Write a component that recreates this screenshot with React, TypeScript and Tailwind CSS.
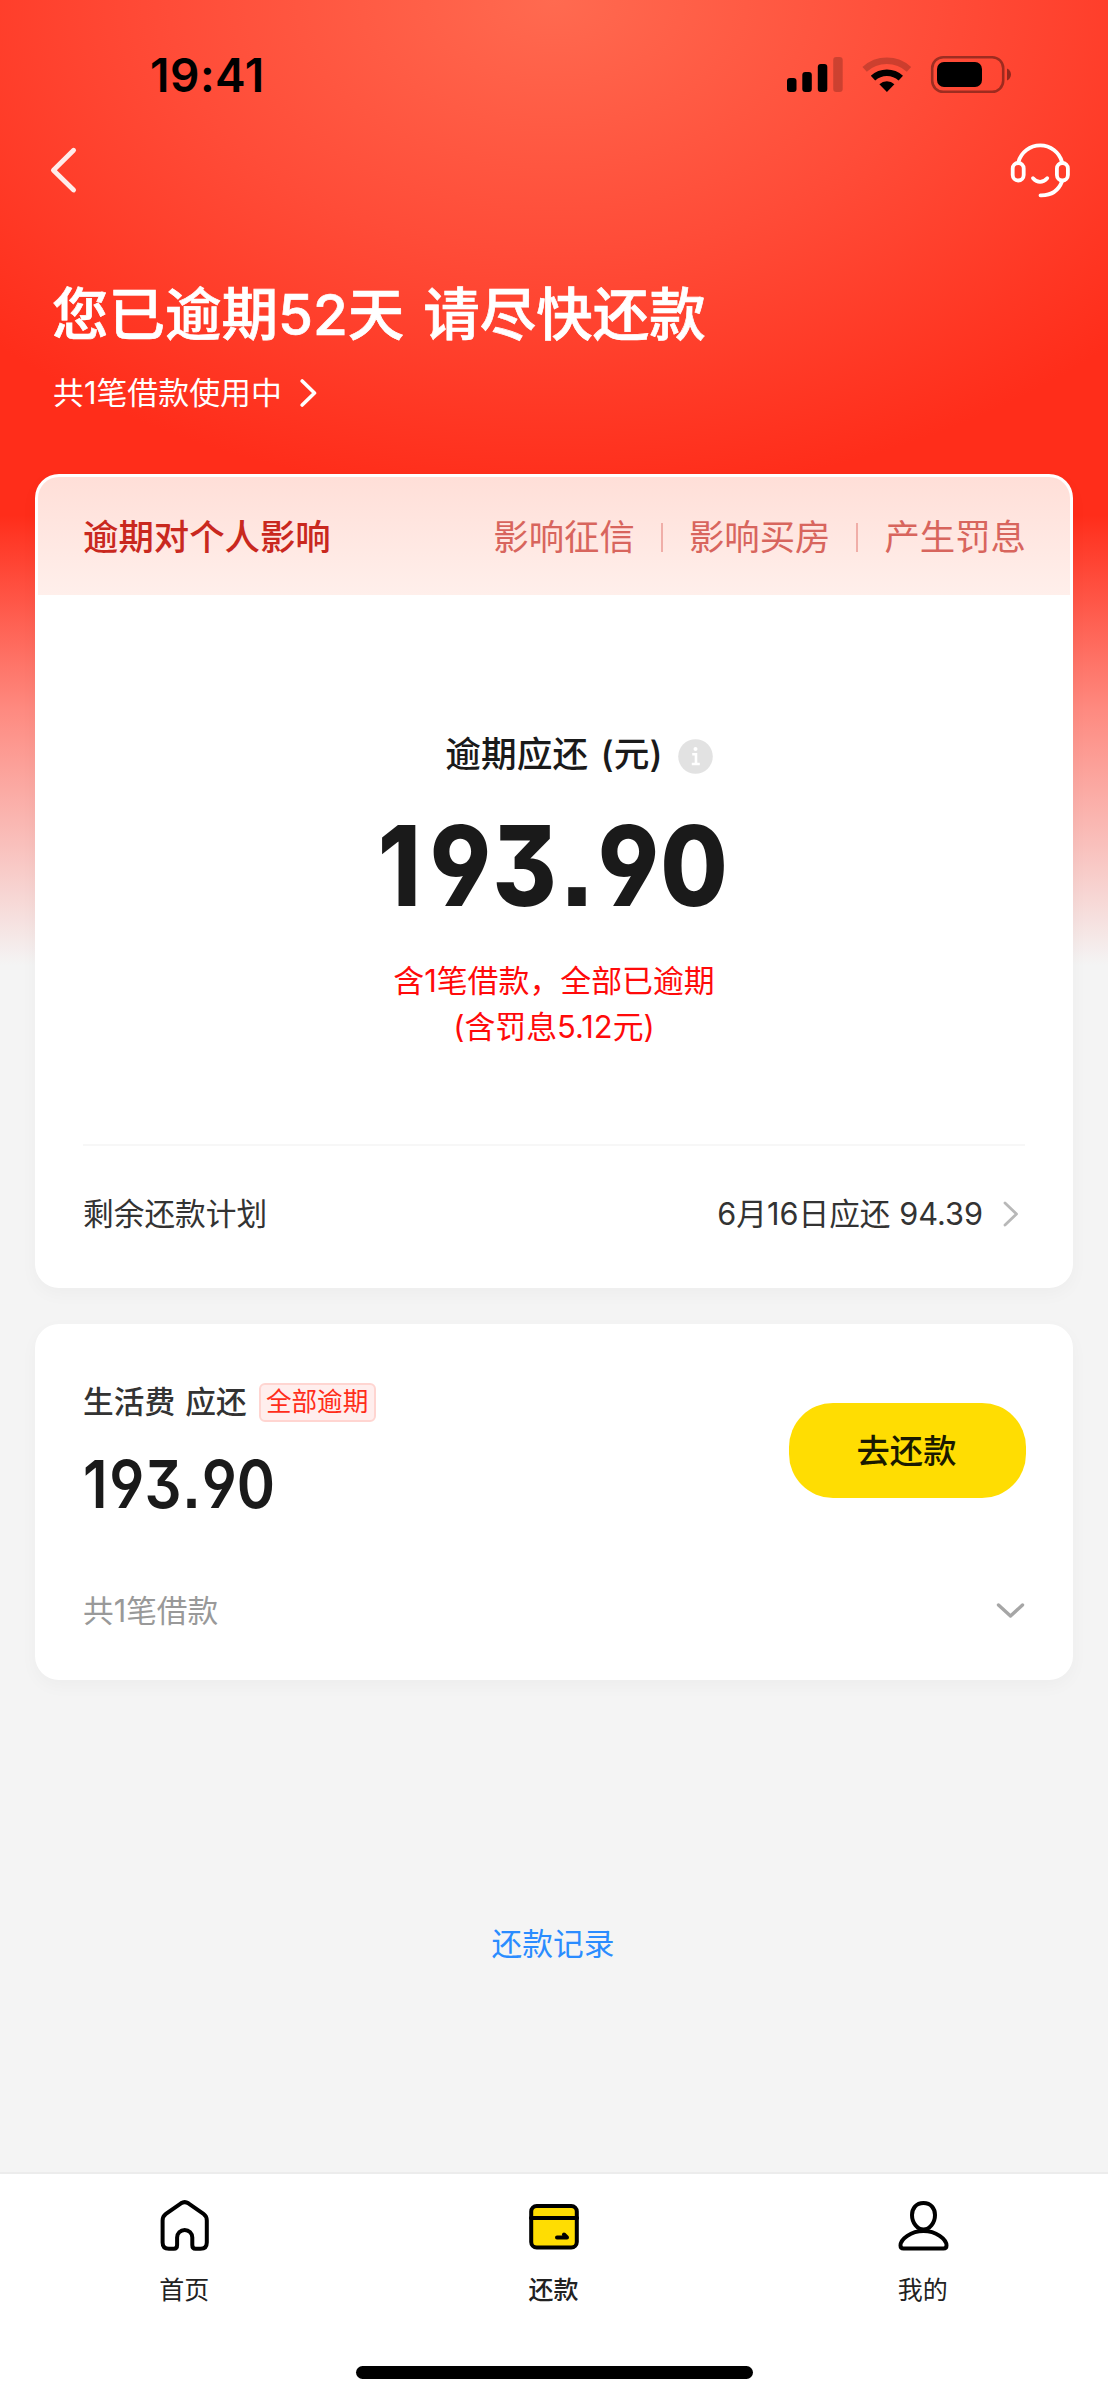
import React from "react";

const tags = ["影响征信", "影响买房", "产生罚息"];

function StatusBar() {
  return (
    <div className="flex h-[124px] items-start justify-between pl-[150px] pr-[96px]">
      <div className="mt-[47px] text-[46px] leading-[56px] font-semibold tracking-[0.5px] text-black">19:41</div>
      <svg className="mt-[54px]" width="226" height="40" viewBox="786 54 226 40">
        <rect x="787" y="78" width="9.5" height="14" rx="3" />
        <rect x="802.3" y="72" width="9.5" height="20" rx="3" />
        <rect x="817.8" y="64" width="9.5" height="28" rx="3" />
        <rect x="833.2" y="57" width="9.5" height="35" rx="3" fillOpacity="0.2" />
        <path d="M864.6 69.4A33 33 0 0 1 909 69.4" fill="none" stroke="#000" strokeOpacity="0.2" strokeWidth="6.5" />
        <path d="M873 78.2A20.5 20.5 0 0 1 900.8 78.2" fill="none" stroke="#000" strokeWidth="6.5" />
        <path d="M886.9 92L879.4 84.2A11 11 0 0 1 894.4 84.2Z" />
        <rect x="932.2" y="57.2" width="71" height="34.6" rx="11" fill="none" stroke="#000" strokeOpacity="0.38" strokeWidth="2.6" />
        <rect x="937" y="62" width="45" height="25" rx="7" />
        <path d="M1007 68.5C1009.6 69.6 1011 72 1011 74.5S1009.6 79.4 1007 80.5Z" fillOpacity="0.42" />
      </svg>
    </div>
  );
}

function Header() {
  return (
    <header>
      <StatusBar />
      <div className="flex h-[92px] items-center justify-between pl-[49px] pr-[37px]">
        <svg width="30" height="50" viewBox="49 145 30 50" fill="none" stroke="#ffecea" strokeWidth="4.8" strokeLinecap="round" strokeLinejoin="round">
          <path d="M73.6 150.2L53.4 170.2L73.6 190" />
        </svg>
        <svg width="62" height="58" viewBox="1009 141 62 58" fill="none" stroke="#fff" strokeWidth="3.8" strokeLinecap="round">
          <path d="M1018.4 162A22.6 22.6 0 0 1 1062 162" />
          <rect x="1012.7" y="163" width="11" height="17.5" rx="5.5" />
          <rect x="1056.9" y="163" width="11" height="17.5" rx="5.5" />
          <path d="M1062 181.5C1058.5 190.5 1051 195.6 1040.5 195.3" />
          <path d="M1033 178.2C1037.5 183.2 1042.5 183.2 1047.2 178.2" />
        </svg>
      </div>
      <h1 className="mt-[67px] ml-[52px] flex h-[64px] items-center text-[56.5px] leading-[64px] font-medium text-white [-webkit-text-stroke:0.7px_white]">
        您已逾期<span>52</span>天<span className="w-[19px]" />请尽快还款
      </h1>
      <div className="mt-[25px] ml-[53px] flex h-[42px] items-center text-[30.9px] text-white">
        <span>共1笔借款使用中</span>
        <svg className="ml-[18px]" width="18" height="32" viewBox="0 0 18 32" fill="none" stroke="#fff" strokeWidth="3.6" strokeLinecap="round" strokeLinejoin="round">
          <path d="M2.2 4L14.5 16L2.2 28" />
        </svg>
      </div>
    </header>
  );
}

function Amount({ large }: { large?: boolean }) {
  return (
    <div
      className={
        large
          ? "mr-[2px] h-[112px] origin-center scale-x-[0.88] text-[111px] leading-[112px] font-extrabold whitespace-nowrap text-[#1a1a1a]"
          : "h-[68px] origin-left scale-x-[0.88] text-[66px] leading-[68px] font-semibold whitespace-nowrap text-[#1a1a1a]"
      }
      style={{ fontFeatureSettings: '"ss01", "ss07"' }}
    >
      <span className={large ? "mr-[10px]" : "mr-[2px]"}>1</span>
      <span className={large ? "tracking-[1.5px]" : ""}>93</span>
      <span className={large ? "mr-[4px] ml-[2px]" : "mr-[1px] ml-[1px]"}>.</span>
      <span className={large ? "mr-[1.5px]" : ""}>9</span>
      <span>0</span>
    </div>
  );
}

function OverdueCard() {
  return (
    <section className="mx-[35px] mt-[60px] h-[814px] rounded-[24px] bg-white p-[3px] shadow-[0_6px_18px_rgba(0,0,0,0.03)]">
      <div className="flex h-[118px] items-center justify-between rounded-t-[21px] bg-linear-to-b from-[#ffdfd8] to-[#ffefeb] pt-[3px] pr-[44px] pl-[45px] text-[35.4px]">
        <span className="font-medium text-[#c9281e]">逾期对个人影响</span>
        <div className="flex items-center text-[#d8655d]">
          {tags.map((t, i) => (
            <React.Fragment key={t}>
              {i > 0 && <span className="mx-[26px] h-[29px] w-[2px] bg-[#f0aea8]" />}
              <span>{t}</span>
            </React.Fragment>
          ))}
        </div>
      </div>
      <div className="flex h-[549px] flex-col items-center pt-[135px]">
        <div className="ml-[50px] flex h-[49px] items-center text-[35.7px] font-medium text-[#1a1a1a]">
          <span className="[word-spacing:3px]">逾期应还 (元)</span>
          <svg className="mt-[3px] ml-[15px]" width="35" height="35" viewBox="0 0 35 35">
            <circle cx="17.5" cy="17.5" r="17.3" fill="#e2e2e2" />
            <circle cx="17.5" cy="10" r="2" fill="#fff" />
            <path d="M14.2 15.2H18V25M13.8 25H21.8" fill="none" stroke="#fff" strokeWidth="2.6" />
          </svg>
        </div>
        <div className="mt-[31px]">
          <Amount large />
        </div>
        <div className="mt-[36px] text-center text-[30.9px] leading-[46px] text-[#ff0a0a]">
          <p>含1笔借款，全部已逾期</p>
          <p>(含罚息5.12元)</p>
        </div>
      </div>
      <div className="mx-[45px] flex h-[139px] items-center justify-between border-t-2 border-[#f7f7f7] pb-[1px] text-[30.7px] text-[#333]">
        <span>剩余还款计划</span>
        <div className="flex items-center">
          <span>6月16日应还 94.39</span>
          <svg className="mr-[5px] ml-[19px]" width="18" height="28" viewBox="0 0 18 28" fill="none" stroke="#b8b8b8" strokeWidth="2.8" strokeLinecap="round" strokeLinejoin="round">
            <path d="M3 3L14.5 14L3 25" />
          </svg>
        </div>
      </div>
    </section>
  );
}

function LoanCard() {
  return (
    <section className="mx-[35px] mt-[36px] h-[356px] rounded-[24px] bg-white pr-[47px] pl-[48px] shadow-[0_6px_18px_rgba(0,0,0,0.03)]">
      <div className="flex h-[238px] justify-between">
        <div className="pt-[59px]">
          <div className="flex h-[39px] items-center text-[30.7px] font-medium text-[#333]">
            <span className="[word-spacing:2px]">生活费 应还</span>
            <span className="ml-[12px] flex h-[39px] w-[117px] items-center justify-center rounded-[6px] border-2 border-[#ffd5d1] bg-[#ffeeed] text-[25.6px] font-normal text-[#ff2d1a]">
              全部逾期
            </span>
          </div>
          <div className="mt-[28px]">
            <Amount />
          </div>
        </div>
        <button className="mt-[79px] h-[95px] w-[237px] rounded-[44px] bg-[#ffdd02] pt-[2px] pr-[2px] text-[33.3px] font-medium text-[#1a1a00]">
          去还款
        </button>
      </div>
      <div className="flex h-[98px] items-center justify-between text-[30.7px] text-[#999]">
        <span>共1笔借款</span>
        <svg width="31" height="18" viewBox="0 0 31 18" fill="none" stroke="#a6a6a6" strokeWidth="3.4" strokeLinecap="round" strokeLinejoin="round">
          <path d="M3.5 3L15.5 14L27.5 3" />
        </svg>
      </div>
    </section>
  );
}

function TabBar() {
  return (
    <nav className="h-[228px] border-t-2 border-[#ececec] bg-white">
      <div className="grid h-[192px] grid-cols-3 pt-[23px] text-[25px] text-[#222]">
        <div className="flex flex-col items-center">
          <svg width="54" height="58" viewBox="158 2197 54 58" fill="none" stroke="#000" strokeWidth="4" strokeLinejoin="round">
            <path d="M181 2203.3Q184.7 2200.9 188.400 2203.3L203.500 2213.800Q206.800 2216.200 206.800 2220.500V2242.500Q206.800 2248.800 200.500 2248.800H195.500Q192.300 2248.800 192.300 2245V2237.500A7.600 7.600 0 0 0 177.100 2237.500V2245Q177.100 2248.800 173.900 2248.800H168.900Q162.600 2248.800 162.600 2242.500V2220.500Q162.600 2216.200 165.900 2213.800Z" />
          </svg>
          <span className="mt-[16px] mr-[1px] leading-[38px]">首页</span>
        </div>
        <div className="flex flex-col items-center">
          <svg width="54" height="58" viewBox="527 2197 54 58" fill="none" stroke="#000" strokeWidth="4" strokeLinejoin="round" strokeLinecap="round">
            <rect x="531.200" y="2206" width="45.600" height="41.500" rx="5.500" fill="#ffdd02" />
            <path d="M531 2218H577" />
            <path d="M557 2237.500H567L564 2234.500" />
          </svg>
          <span className="mt-[16px] mr-[1px] leading-[38px] font-medium">还款</span>
        </div>
        <div className="flex flex-col items-center">
          <svg width="54" height="58" viewBox="896 2197 54 58" fill="none" stroke="#000" strokeWidth="4" strokeLinejoin="round">
            <path d="M923.500 2203C931 2203 935 2208.500 935 2215C935 2223 929.500 2229.500 923.500 2229.500S912 2223 912 2215C912 2208.500 916 2203 923.500 2203Z" />
            <path d="M923.500 2231C936 2231 946.500 2239 946.500 2245.500Q946.500 2248.500 943.500 2248.500H903.500Q900.500 2248.500 900.500 2245.500C900.500 2239 911 2231 923.500 2231Z" />
          </svg>
          <span className="mt-[16px] mr-[1px] leading-[38px]">我的</span>
        </div>
      </div>
      <div className="mx-auto h-[13px] w-[397px] rounded-full bg-black" />
    </nav>
  );
}

export default function App() {
  return (
    <div className="flex h-[2400px] w-[1108px] flex-col bg-[#f4f4f4] bg-[radial-gradient(ellipse_770px_500px_at_554px_0px,#ff6a50_0%,#ff4c38_50%,#ff2d1a_100%)] bg-[length:100%_500px] bg-no-repeat font-['Inter','Noto_Sans_CJK_SC',sans-serif]">
      <div className="flex-1 bg-[linear-gradient(to_bottom,transparent_0px,transparent_499px,#ff2d1a_499px,#ff2d1a_515px,#fe8a80_710px,#f9c0bc_845px,#f4f4f4_965px,#f4f4f4_100%)]">
        <Header />
        <OverdueCard />
        <LoanCard />
        <div className="mt-[241px] pr-[2px] text-center text-[30.7px] leading-[46px] text-[#2a8cff]">还款记录</div>
      </div>
      <TabBar />
    </div>
  );
}
